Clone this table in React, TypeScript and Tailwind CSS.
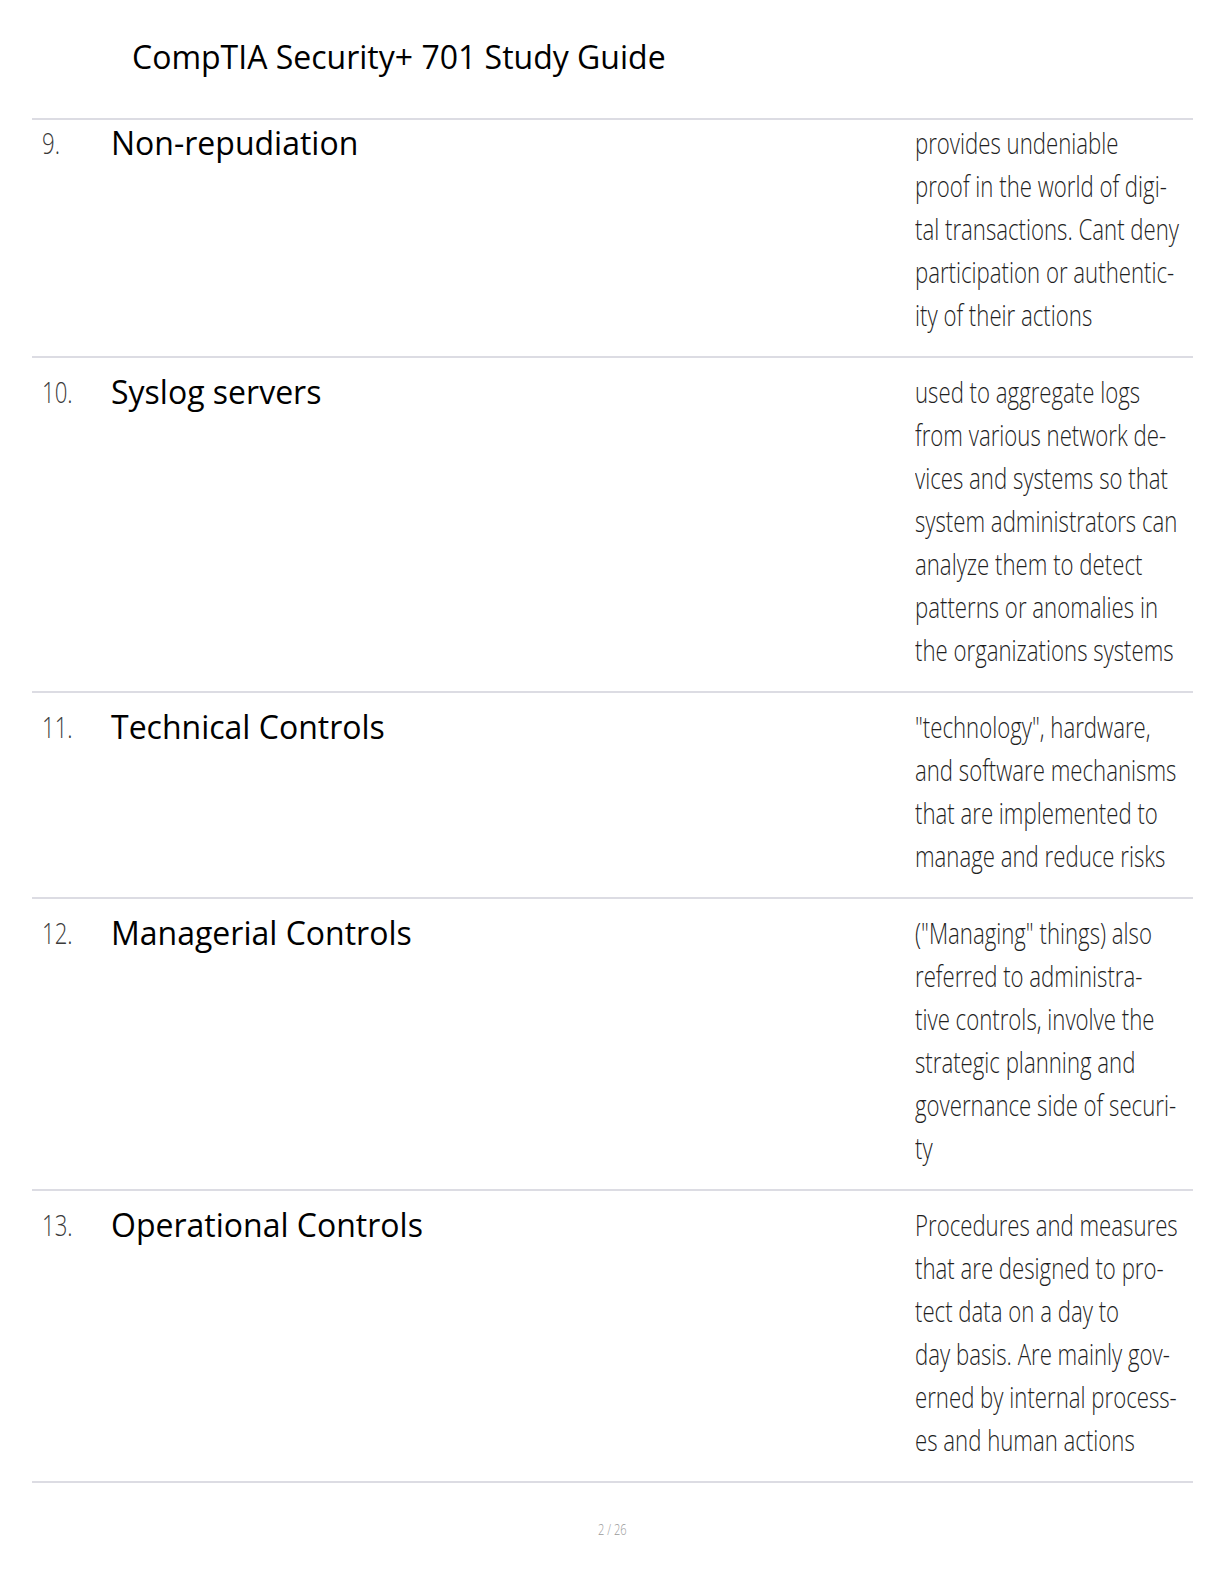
import React from 'react';

interface Term {
  num: string;
  title: string;
  lines: string[];
  first?: boolean;
}

const terms: Term[] = [
  {
    num: '9.',
    title: 'Non-repudiation',
    first: true,
    lines: [
      'provides undeniable',
      'proof in the world of digi-',
      'tal transactions. Cant deny',
      'participation or authentic-',
      'ity of their actions',
    ],
  },
  {
    num: '10.',
    title: 'Syslog servers',
    lines: [
      'used to aggregate logs',
      'from various network de-',
      'vices and systems so that',
      'system administrators can',
      'analyze them to detect',
      'patterns or anomalies in',
      'the organizations systems',
    ],
  },
  {
    num: '11.',
    title: 'Technical Controls',
    lines: [
      '"technology", hardware,',
      'and software mechanisms',
      'that are implemented to',
      'manage and reduce risks',
    ],
  },
  {
    num: '12.',
    title: 'Managerial Controls',
    lines: [
      '("Managing" things) also',
      'referred to administra-',
      'tive controls, involve the',
      'strategic planning and',
      'governance side of securi-',
      'ty',
    ],
  },
  {
    num: '13.',
    title: 'Operational Controls',
    lines: [
      'Procedures and measures',
      'that are designed to pro-',
      'tect data on a day to',
      'day basis. Are mainly gov-',
      'erned by internal process-',
      'es and human actions',
    ],
  },
];

const App: React.FC = () => {
  return (
    <div className="min-h-[1584px] w-[1224px] bg-white font-['Open_Sans','Noto_Sans',sans-serif] text-black">
      <header className="pl-[132px] pt-[35px] pb-[40px]">
        <h1 className="text-[32px] leading-[43px] font-normal">CompTIA Security+ 701 Study Guide</h1>
      </header>

      <div className="ml-[32px] w-[1161px] border-b-2 border-[#dcdce3]">
        {terms.map((t) => (
          <div
            key={t.num}
            className={`grid grid-cols-[79px_804px_1fr] border-t-2 border-[#dcdce3] pb-[20px] ${
              t.first ? 'pt-[1px]' : 'pt-[12px]'
            }`}
          >
            <div className="pl-[10px] text-[30px] leading-[43px] font-light text-[#3a3a3a]">
              <span className="block origin-left scale-x-[0.74]">{t.num}</span>
            </div>
            <div className="text-[32px] leading-[43px] font-normal">{t.title}</div>
            <div className="text-[30px] leading-[43px] font-light text-[#1f1f1f]">
              <div className="origin-left scale-x-[0.74] whitespace-nowrap">
                {t.lines.map((line, i) => (
                  <div key={i}>{line}</div>
                ))}
              </div>
            </div>
          </div>
        ))}
      </div>

      <footer className="flex justify-center pt-[36px]">
        <span className="inline-block origin-center scale-x-[0.74] text-[15px] leading-[20px] font-light text-[#9a9a9a]">
          2 / 26
        </span>
      </footer>
    </div>
  );
};

export default App;
